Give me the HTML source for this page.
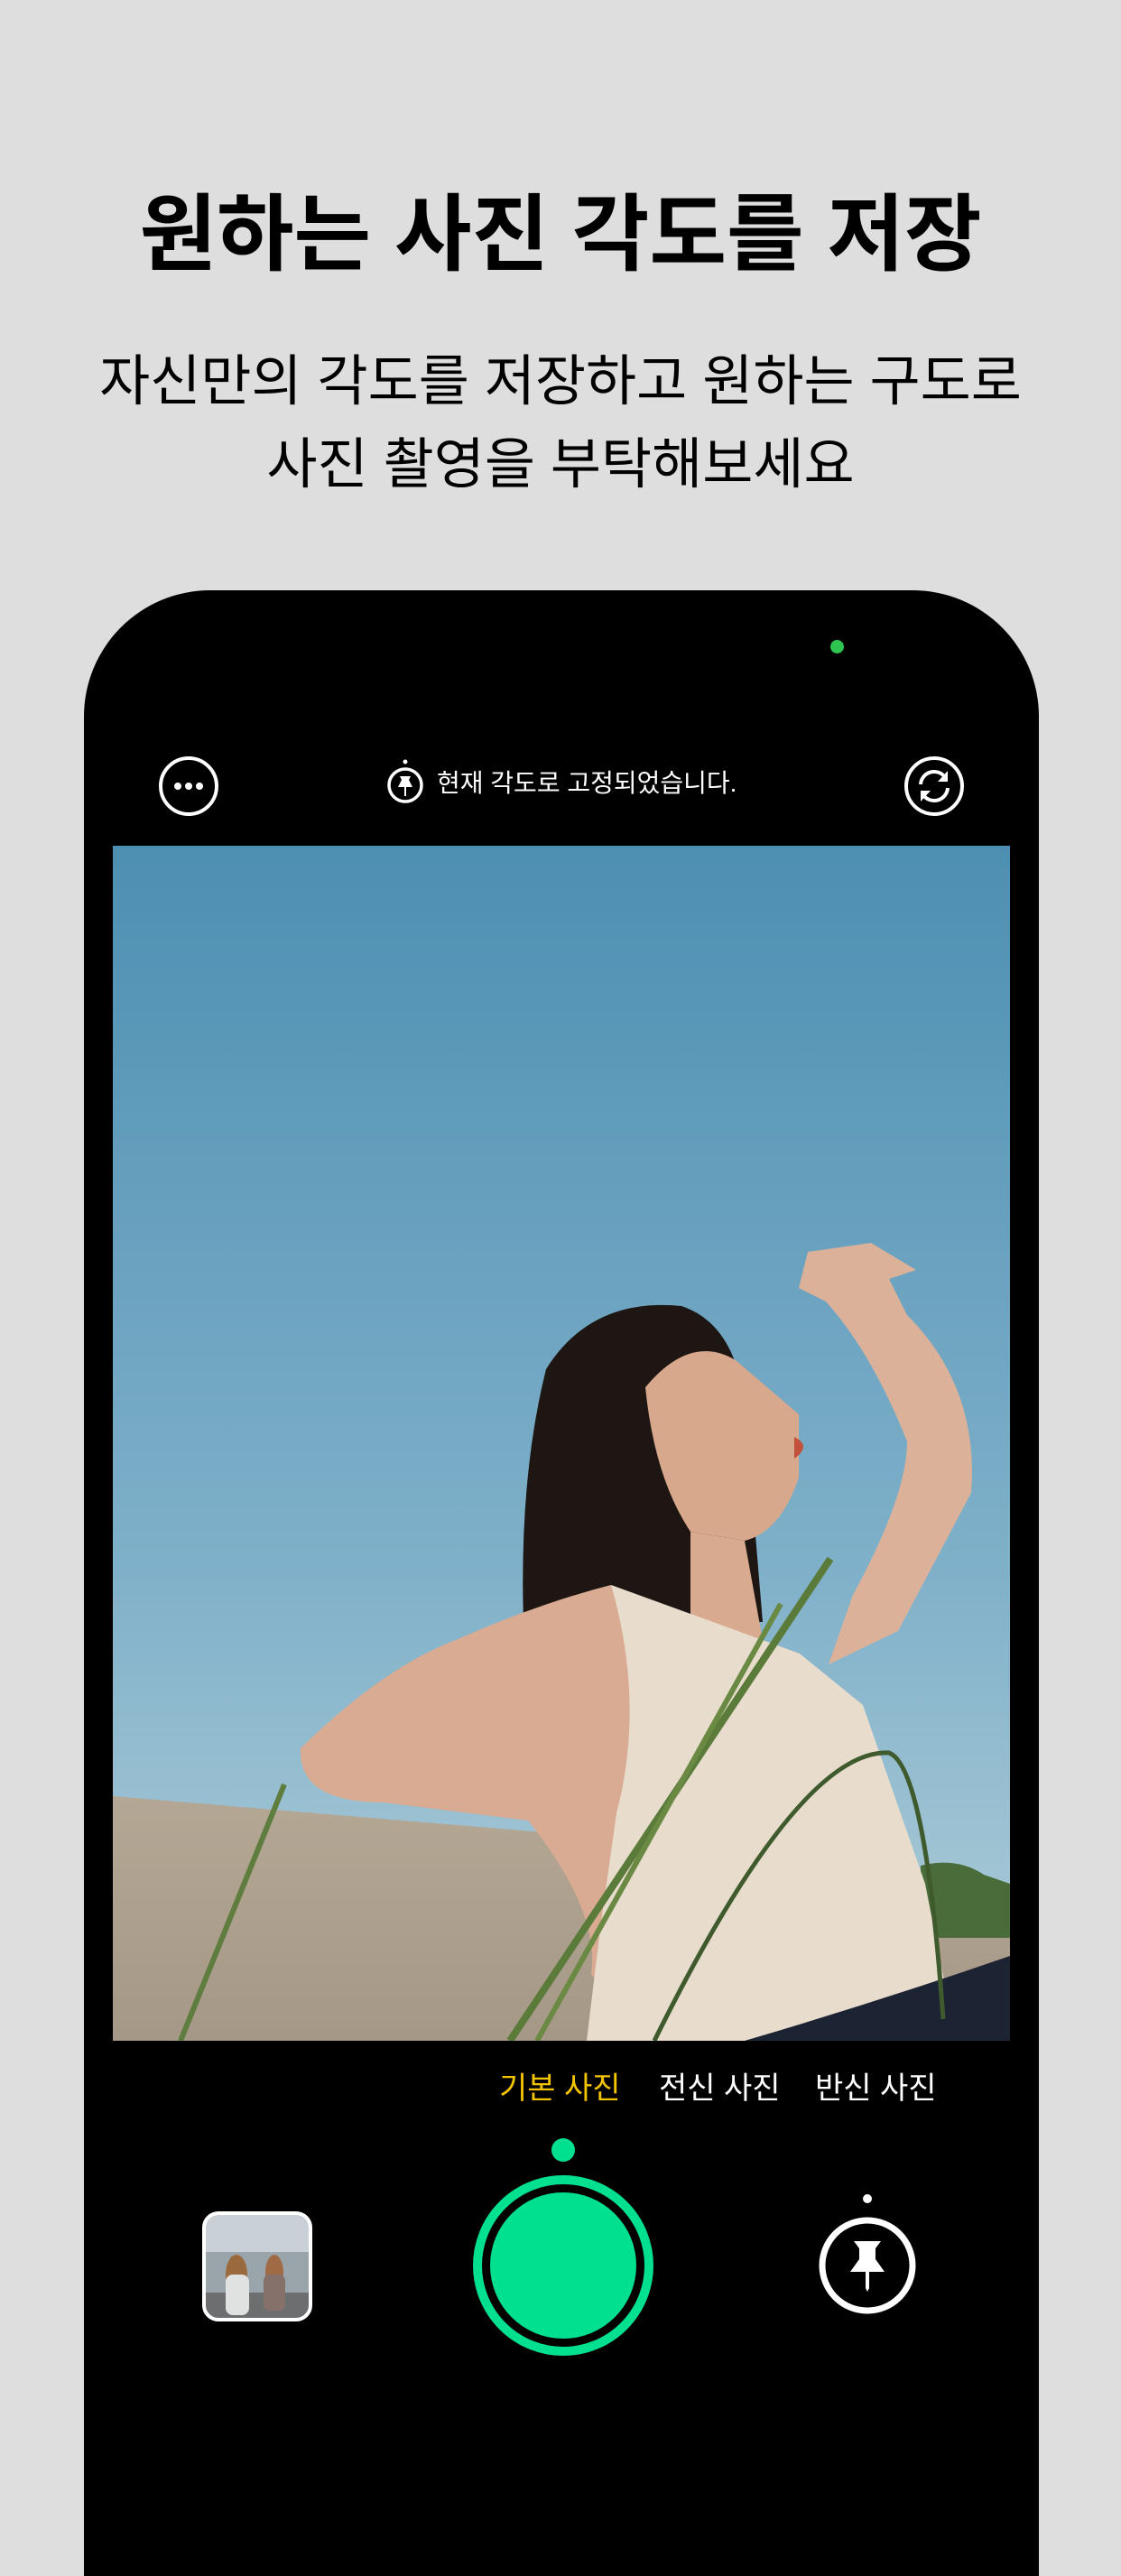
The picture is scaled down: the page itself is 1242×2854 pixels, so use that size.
<!DOCTYPE html>
<html><head><meta charset="utf-8"><style>
*{margin:0;padding:0;box-sizing:border-box}
body{width:1242px;height:2688px;background:#dedede;position:relative;overflow:hidden;font-family:"Liberation Sans","Noto Sans CJK KR",sans-serif}
.t{position:absolute;left:0;width:1242px;text-align:center;color:#000;white-space:nowrap}
.phone{position:absolute;left:93px;top:654px;width:1058px;height:2200px;background:#000;border-radius:140px 140px 0 0}
.abs{position:absolute}
</style></head><body>
<div class="t" style="top:198px;font-size:93px;font-weight:bold;line-height:124px">원하는 사진 각도를 저장</div>
<div class="t" style="top:376px;font-size:61px;line-height:92px">자신만의 각도를 저장하고 원하는 구도로<br>사진 촬영을 부탁해보세요</div>
<div class="phone"></div>
<div class="abs" style="left:920px;top:709px;width:15px;height:15px;border-radius:50%;background:#2ec44f"></div>
<!-- top bar -->
<svg class="abs" style="left:174px;top:836px" width="70" height="70" viewBox="0 0 70 70"><circle cx="35" cy="35" r="31" fill="none" stroke="#fff" stroke-width="4"/><circle cx="23" cy="35" r="4" fill="#fff"/><circle cx="35" cy="35" r="4" fill="#fff"/><circle cx="47" cy="35" r="4" fill="#fff"/></svg>
<svg class="abs" style="left:1000px;top:836px" width="70" height="70" viewBox="0 0 70 70"><circle cx="35" cy="35" r="31" fill="none" stroke="#fff" stroke-width="4"/><path d="M20 33a15 15 0 0 1 27-8" fill="none" stroke="#fff" stroke-width="4"/><path d="M50 18v12h-11z" fill="#fff"/><path d="M50 37a15 15 0 0 1-27 8" fill="none" stroke="#fff" stroke-width="4"/><path d="M20 52v-12h11z" fill="#fff"/></svg>
<svg class="abs" style="left:428px;top:840px" width="42" height="56" viewBox="0 0 42 56"><circle cx="21" cy="4" r="2.5" fill="#fff"/><circle cx="21" cy="30" r="18" fill="none" stroke="#fff" stroke-width="3.5"/><path d="M15 20h12l-2 4 4 8h-16l4-8z M20 32h2v10h-2z" fill="#fff"/></svg>
<div class="abs" style="left:484px;top:848px;font-size:28px;line-height:40px;color:#fff;white-space:nowrap">현재 각도로 고정되었습니다.</div>
<!-- photo -->
<svg class="abs" style="left:125px;top:937px" width="994" height="1324" viewBox="0 0 994 1324">
<defs><linearGradient id="sky" x1="0" y1="0" x2="0" y2="1"><stop offset="0" stop-color="#4d8fb2"/><stop offset="0.6" stop-color="#7fb0c9"/><stop offset="1" stop-color="#b2cfd9"/></linearGradient>
<linearGradient id="wall" x1="0" y1="0" x2="0" y2="1"><stop offset="0" stop-color="#b4a794"/><stop offset="1" stop-color="#a69886"/></linearGradient></defs>
<rect width="994" height="1324" fill="url(#sky)"/>
<path d="M0 1053 L560 1100 L994 1200 L994 1324 L0 1324Z" fill="url(#wall)"/>
<path d="M895 1130 q40 -10 70 10 l29 10 v60 h-100z" fill="#4a6b3a"/>
<path d="M455 860 Q450 700 480 580 Q530 500 630 510 Q690 530 700 620 L720 860Z" fill="#1e1613"/>
<path d="M590 600 Q640 540 690 570 L760 630 L760 700 Q740 760 700 770 L640 760 Q600 700 590 600Z" fill="#d7a88c"/>
<path d="M755 655 q20 10 0 24z" fill="#c2513c"/>
<path d="M640 760 L700 770 L720 880 L640 880Z" fill="#d8ab90"/>
<path d="M793 907 L870 870 L951 717 Q960 600 880 520 L860 480 L890 470 L840 440 L770 450 L760 490 L790 505 Q840 560 880 660 Q880 720 820 830 Z" fill="#dcb199"/>
<path d="M552 819 Q470 840 380 880 Q300 910 208 1000 Q205 1060 300 1060 L460 1080 Q540 1180 530 1250 L560 1290 Q600 1260 600 1180 L560 1070 L600 900Z" fill="#d9ab92"/>
<path d="M552 819 L761 895 L831 952 L900 1150 L932 1313 L926 1324 L525 1324 L540 1200 L558 1072 Q590 950 552 819Z" fill="#e8dccd"/>
<path d="M700 1324 Q850 1280 994 1230 L994 1324Z" fill="#1c2333"/>
<path d="M75 1324 L190 1040" stroke="#5e7d3e" stroke-width="6" fill="none"/>
<path d="M440 1324 L795 790" stroke="#5b7b3a" stroke-width="8" fill="none"/>
<path d="M470 1324 L740 840" stroke="#6a8a44" stroke-width="6" fill="none"/>
<path d="M600 1324 Q760 1000 860 1005 Q900 1020 920 1300" stroke="#3f5a2c" stroke-width="5" fill="none"/>
</svg>
<!-- modes -->
<div class="abs" style="left:553px;top:2292px;font-size:34px;line-height:44px;color:#f5c400;white-space:nowrap">기본 사진</div>
<div class="abs" style="left:730px;top:2292px;font-size:34px;line-height:44px;color:#fff;white-space:nowrap">전신 사진</div>
<div class="abs" style="left:903px;top:2292px;font-size:34px;line-height:44px;color:#fff;white-space:nowrap">반신 사진</div>
<div class="abs" style="left:611px;top:2369px;width:26px;height:26px;border-radius:50%;background:#00e08f"></div>
<div class="abs" style="left:524px;top:2410px;width:200px;height:200px;border-radius:50%;border:10px solid #00e08f"></div>
<div class="abs" style="left:543px;top:2429px;width:162px;height:162px;border-radius:50%;background:#00e08f"></div>
<!-- thumbnail -->
<svg class="abs" style="left:224px;top:2450px" width="122" height="122" viewBox="0 0 122 122"><defs><clipPath id="c"><rect x="2" y="2" width="118" height="118" rx="16"/></clipPath></defs><g clip-path="url(#c)"><rect width="122" height="122" fill="#c9d0d6"/><rect y="45" width="122" height="77" fill="#9aa4ab"/><rect y="90" width="122" height="32" fill="#6c6e70"/><ellipse cx="38" cy="70" rx="12" ry="22" fill="#9a6a3e"/><rect x="26" y="70" width="26" height="45" rx="8" fill="#e0e2e2"/><ellipse cx="80" cy="68" rx="10" ry="20" fill="#a06a44"/><rect x="68" y="70" width="24" height="40" rx="7" fill="#85706a"/></g><rect x="2" y="2" width="118" height="118" rx="16" fill="none" stroke="#fff" stroke-width="4"/></svg>
<!-- pin button -->
<div class="abs" style="left:956px;top:2431px;width:10px;height:10px;border-radius:50%;background:#fff"></div>
<svg class="abs" style="left:906px;top:2455px" width="110" height="110" viewBox="0 0 110 110"><circle cx="55" cy="55" r="50" fill="none" stroke="#fff" stroke-width="7"/><path d="M40 28h30l-6 8v12l10 14h-38l10-14v-12z" fill="#fff"/><path d="M53 62h4v18l-2 4-2-4z" fill="#fff"/></svg>
</body></html>
